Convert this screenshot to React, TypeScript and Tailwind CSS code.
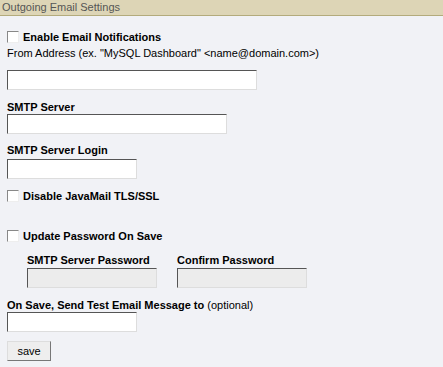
const font = { fontFamily: '"Liberation Sans", Arial, sans-serif' };

const inputCls =
  "block h-[20px] border border-t-[#555] border-l-[#555] border-b-[#ddd] border-r-[#ddd]";

const Check = () => (
  <span className="inline-block w-[12px] h-[12px] bg-white border border-t-[#888] border-l-[#888] border-b-[#eee] border-r-[#eee] shrink-0" />
);

const App = () => {
  return (
    <div className="w-[443px] h-[367px] bg-[#f1f2f6] text-[11px] text-black overflow-hidden" style={font}>
      <div className="h-[16px] bg-[#ddd5b6] border-b border-[#b3ab7c] pl-[2px] text-[11px] leading-[15px] text-[#555]">
        Outgoing Email Settings
      </div>
      <div className="pl-[7px]">
        <div className="mt-[15px] flex items-center gap-[4px] h-[12px]">
          <Check />
          <span className="font-bold leading-[12px]">Enable Email Notifications</span>
        </div>
        <div className="mt-[3px] leading-[14px]">
          From Address (ex. "MySQL Dashboard" &lt;name@domain.com&gt;)
        </div>
        <input className={`${inputCls} mt-[10px] w-[250px] bg-white`} />
        <div className="mt-[10px] font-bold leading-[14px]">SMTP Server</div>
        <input className={`${inputCls} mt-[0px] w-[220px] bg-white`} />
        <div className="mt-[9px] font-bold leading-[14px]">SMTP Server Login</div>
        <input className={`${inputCls} mt-[2px] w-[130px] bg-white`} />
        <div className="mt-[11px] flex items-center gap-[4px] h-[12px]">
          <Check />
          <span className="font-bold leading-[12px]">Disable JavaMail TLS/SSL</span>
        </div>
        <div className="mt-[28px] flex items-center gap-[4px] h-[12px]">
          <Check />
          <span className="font-bold leading-[12px]">Update Password On Save</span>
        </div>
        <div className="flex gap-[20px] pl-[20px] mt-[11px]">
          <div>
            <div className="font-bold leading-[14px]">SMTP Server Password</div>
            <input disabled className={`${inputCls} mt-[1px] w-[130px] bg-[#ececec]`} />
          </div>
          <div>
            <div className="font-bold leading-[14px]">Confirm Password</div>
            <input disabled className={`${inputCls} mt-[1px] w-[130px] bg-[#ececec]`} />
          </div>
        </div>
        <div className="mt-[10px] leading-[14px]">
          <span className="font-bold">On Save, Send Test Email Message to</span> (optional)
        </div>
        <input className={`${inputCls} mt-[0px] w-[130px] bg-white`} />
        <button className="mt-[9px] w-[44px] h-[20px] bg-[#eee] border border-t-[#ddd] border-l-[#ddd] border-b-[#777] border-r-[#777] text-[11px] leading-[18px]">
          save
        </button>
      </div>
    </div>
  );
};

export default App;
